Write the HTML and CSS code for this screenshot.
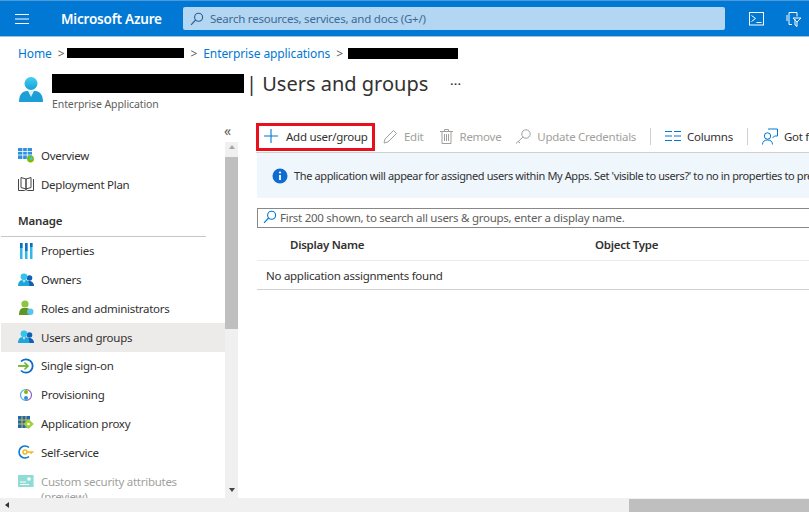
FILE: index.html
```html
<!DOCTYPE html>
<html>
<head>
    <meta charset='utf-8'>
    <title>Users and groups - Microsoft Azure</title>
    <link rel="stylesheet" href="styles.css">
</head>
<body>
<div class="app">
    <header class="topbar">
        <svg class="menu-icon" width="14" height="12" viewBox="0 0 14 12"><path d="M0 1.5h14M0 6h14M0 10.5h14" stroke="#fff" stroke-width="1.1"/></svg>
        <div class="brand">Microsoft Azure</div>
        <div class="search">
            <svg width="14" height="14" viewBox="0 0 14 14" fill="none" stroke="#2b5f96" stroke-width="1.1"><circle cx="8.6" cy="5.2" r="4"/><path d="M5.6 8 1 12.8"/></svg>
            <span>Search resources, services, and docs (G+/)</span>
        </div>
        <svg class="top-icon" width="16" height="14" viewBox="0 0 16 14" fill="none" stroke="#fff"><rect x=".5" y=".5" width="14" height="12.5"/><path d="M2.5 3.5 6.5 6.5 2.5 9.5M7.5 10.5h5"/></svg>
        <svg class="top-icon" width="16" height="16" viewBox="0 0 16 16" fill="none" stroke="#fff"><path d="M3 1.5h8v4M3 1.5v12h3M1 4v6M9 8V14l2 1.5V11l4-4H7l4 4"/></svg>
    </header>

    <nav class="crumbs">
        <a>Home</a><span class="gt">&gt;</span><span class="blot blot-a"></span><span class="gt gt-b">&gt;</span><a>Enterprise applications</a><span class="gt">&gt;</span><span class="blot blot-b"></span>
    </nav>

    <div class="title-row">
        <svg class="app-icon" width="24" height="26" viewBox="0 0 24 26"><defs><linearGradient id="ua" x1="0" y1="0" x2="0" y2="1"><stop offset="0" stop-color="#3fd0f2"/><stop offset="1" stop-color="#1aa0d8"/></linearGradient></defs><circle cx="12" cy="6.5" r="6.5" fill="url(#ua)"/><path d="M0 25c0-7 3-11 8-11h8c5 0 8 4 8 11z" fill="#1c9fd6"/><path d="M9 14h6l-3 6z" fill="#d8f3fb"/></svg>
        <div class="title-text">
            <div class="title-line"><span class="blot blot-title"></span><h1>| Users and groups</h1><span class="more">···</span></div>
            <div class="subtitle">Enterprise Application</div>
        </div>
    </div>

    <div class="body">
        <aside class="side">
            <div class="collapse">«</div>
            <div class="side-main">
                <ul class="nav">
                    <li><svg width="16" height="16" viewBox="0 0 16 16"><path d="M0 1h14v11H0z" fill="#2f8fe0"/><path d="M0 4.5h14M0 8h14M4.7 1v11M9.3 1v11" stroke="#fff" stroke-width=".8"/><circle cx="12.5" cy="12" r="3.4" fill="#7fba00"/><circle cx="13" cy="11.5" r="1.5" fill="#39c7e8"/></svg>Overview</li>
                    <li><svg width="16" height="16" viewBox="0 0 16 16" fill="none" stroke="#444"><path d="M.5 3v11.5h6l1.5-1 1.5 1h6V3"/><path d="M3 1.5 8 3v10L3 11.5zM13 1.5 8 3v10l5-1.5z" fill="#fff"/></svg>Deployment Plan</li>
                    <li class="group">Manage</li>
                    <li><svg width="16" height="16" viewBox="0 0 16 16"><path d="M2 0h2.500v16H2zM7 0h2.500v16H7zM12 0h2.500v16H12z" fill="#34b6ea"/><path d="M2 0h2.500v5H2zM7 0h2.500v8H7zM12 0h2.500v4H12z" fill="#0b6fc4"/></svg>Properties</li>
                    <li><svg width="16" height="16" viewBox="0 0 16 16"><use href="#people"/></svg>Owners</li>
                    <li><svg width="16" height="16" viewBox="0 0 16 16"><circle cx="7" cy="4" r="3.6" fill="#8cc63f"/><path d="M1 15c0-5 2-7 4-7h4c2 0 4 2 4 7z" fill="#5e9624"/><circle cx="12.3" cy="11.8" r="3.2" fill="#5cc4ea"/></svg>Roles and administrators</li>
                    <li class="active"><svg width="16" height="16" viewBox="0 0 16 16"><use href="#people"/></svg>Users and groups</li>
                    <li><svg width="16" height="16" viewBox="0 0 16 16" fill="none"><path d="M3 3.5A6.7 6.7 0 1 1 3 12.500" stroke="#0a6cc4" stroke-width="1.8"/><path d="M0 8h9" stroke="#6cb52d" stroke-width="1.8"/><path d="M6.500 4.500 10 8l-3.500 3.500" stroke="#6cb52d" stroke-width="1.6"/></svg>Single sign-on</li>
                    <li><svg width="16" height="16" viewBox="0 0 16 16" fill="none"><path d="M8 2.500a5.500 5.500 0 0 1 0 11" stroke="#8a5fb8" stroke-width="1.2"/><path d="M8 13.500a5.500 5.500 0 0 1 0-11" stroke="#45a9e0" stroke-width="1.2"/><circle cx="8" cy="5" r="2" fill="#7fba00"/><circle cx="8" cy="11" r="2" fill="#2f8fe0"/></svg>Provisioning</li>
                    <li><svg width="16" height="16" viewBox="0 0 16 16"><path d="M0 1h12v12H0z" fill="#1668c0"/><path d="M4 1v12M8 1v12M0 5h12M0 9h12" stroke="#f0c420" stroke-width=".9"/><path d="M10.500 4 15.800 9 10.500 14 5.500 9z" fill="#a3cf3c"/><circle cx="10.500" cy="9" r="1.300" fill="#fff"/></svg>Application proxy</li>
                    <li><svg width="16" height="16" viewBox="0 0 16 16" fill="none"><path d="M11 3.500A6 6 0 1 0 11 12.500" stroke="#0a78d4" stroke-width="1.6"/><circle cx="7" cy="8" r="2" stroke="#f2b91c" stroke-width="1.4"/><path d="M9 8h6.500M13 8v2" stroke="#f2b91c" stroke-width="1.4"/></svg>Self-service</li>
                    <li class="disabled"><svg width="16" height="16" viewBox="0 0 16 16"><rect y="1" width="12" height="12" fill="#8fdcd4" transform="scale(1.3 1)"/><path d="M2 8h6M2 10.500h9" stroke="#fff"/><circle cx="11" cy="5" r="1.800" fill="#fff"/></svg><span>Custom security attributes (preview)</span></li>
                </ul>
                <div class="vscroll">
                    <span class="arrow-up"></span>
                    <span class="vthumb"></span>
                    <span class="arrow-down"></span>
                </div>
            </div>
        </aside>

        <main class="content">
            <div class="toolbar">
                <button class="tool add"><svg width="14" height="14" viewBox="0 0 14 14"><path d="M7 0v14M0 7h14" stroke="#0078d4" stroke-width="1.1"/></svg>Add user/group</button>
                <button class="tool off edit"><svg width="15" height="15" viewBox="0 0 15 15" fill="none" stroke="#a19f9d"><path d="M1 14l1-4 8.500-8.500 3 3L5 13z"/></svg>Edit</button>
                <button class="tool off remove"><svg width="13" height="15" viewBox="0 0 13 15" fill="none" stroke="#a19f9d"><path d="M0 2.500h13M4.500 2.500V.5h4v2M2 2.500v12h9v-12M4.500 5v7M6.500 5v7M8.500 5v7"/></svg>Remove</button>
                <button class="tool off cred"><svg width="16" height="15" viewBox="0 0 16 15" fill="none" stroke="#a19f9d"><circle cx="11" cy="5" r="4.200"/><path d="M8 8 1 14.500M3 12.500l2 1.500"/></svg>Update Credentials</button>
                <span class="sep"></span>
                <button class="tool cols"><svg width="16" height="10" viewBox="0 0 16 10"><path d="M0 .5h7M9 .5h7M0 5h7M9 5h7M0 9.500h7M9 9.500h7" stroke="#0078d4"/></svg>Columns</button>
                <span class="sep"></span>
                <button class="tool got"><svg width="16" height="17" viewBox="0 0 16 17" fill="none" stroke="#0078d4"><circle cx="5.500" cy="8" r="3.200"/><path d="M.5 16.500c0-3 2-4.500 5-4.500s5 1.500 5 4.500M6 1h9.500v7H12.500l-2 2"/></svg>Got feedback?</button>
            </div>

            <div class="notice">
                <svg width="16" height="16" viewBox="0 0 16 16"><circle cx="8" cy="8" r="7.500" fill="#0f6cd0"/><path d="M8 7v5" stroke="#fff" stroke-width="1.8"/><circle cx="8" cy="4.500" r="1.100" fill="#fff"/></svg>
                <span>The application will appear for assigned users within My Apps. Set 'visible to users?' to no in properties to prevent this.</span>
            </div>

            <div class="filter">
                <svg width="14" height="14" viewBox="0 0 14 14" fill="none" stroke="#0078d4" stroke-width="1.1"><circle cx="8.600" cy="5.200" r="4"/><path d="M5.600 8 1 12.800"/></svg>
                <span>First 200 shown, to search all users &amp; groups, enter a display name.</span>
            </div>

            <div class="thead"><span class="col-name">Display Name</span><span class="col-type">Object Type</span></div>
            <div class="empty">No application assignments found</div>
        </main>
    </div>

    <div class="hscroll">
        <span class="arrow-left"></span>
        <span class="hthumb"></span>
    </div>
</div>

<svg width="0" height="0" class="defs">
    <symbol id="people" viewBox="0 0 16 16">
        <circle cx="11.500" cy="6" r="2.800" fill="#0f5fb5"/>
        <path d="M8 14c0-3.500 1.500-5 3.500-5s4.500 1.500 4.500 5z" fill="#0f5fb5"/>
        <circle cx="6" cy="4.800" r="3.400" fill="#35c3ec"/>
        <path d="M0 14c0-4 2-5.800 4-5.800h4c2 0 3.500 1.800 3.500 5.800z" fill="#1da5dc"/>
        <path d="M4.800 8.200h2.400L6 11z" fill="#e2f6fc"/>
    </symbol>
</svg>
</body>
</html>
```

FILE: styles.css
```css
* {
    box-sizing: border-box;
    font-family: "Noto Sans", "Open Sans", sans-serif;
}
html, body {
    margin: 0;
    height: 100%;
    overflow: hidden;
    background-color: #fff;
    color: #323130;
    font-size: 11.5px;
}
.defs {
    position: absolute;
}
.app {
    height: 512px;
    display: flex;
    flex-direction: column;
}

/* top bar */
.topbar {
    height: 37px;
    flex: none;
    display: flex;
    align-items: center;
    background-color: #0078d4;
    border-top: 1px solid #4b9bdc;
    border-bottom: 1px solid #8fc3ea;
    color: #fff;
}
.menu-icon {
    margin-left: 15px;
}
.brand {
    margin-left: 32px;
    width: 122px;
    font-size: 13.5px;
    font-weight: 600;
    letter-spacing: -0.2px;
    white-space: nowrap;
}
.search {
    width: 542px;
    height: 23px;
    display: flex;
    align-items: center;
    gap: 6px;
    padding-left: 7px;
    background-color: #b3d6f2;
    border-radius: 2px;
    color: #3f6a94;
    letter-spacing: -0.22px;
}
.top-icon {
    margin-left: 24px;
}
.top-icon + .top-icon {
    margin-left: 21px;
}

/* breadcrumb */
.crumbs {
    height: 32px;
    flex: none;
    display: flex;
    align-items: center;
    padding-left: 18px;
    font-size: 12px;
    color: #0078d4;
    letter-spacing: -0.1px;
}
.gt {
    margin: 0 6px;
    color: #605e5c;
}
.gt-b {
    margin: 0 6px 0 7px;
}
.blot {
    display: inline-block;
    background-color: #000;
}
.blot-a {
    width: 117px;
    height: 10px;
    margin-left: -4px;
}
.blot-b {
    width: 110px;
    height: 11px;
    margin-left: -1px;
}

/* title */
.title-row {
    height: 53px;
    flex: none;
    display: flex;
    padding: 2px 0 0 19px;
}
.app-icon {
    margin-top: 6px;
}
.title-text {
    margin-left: 9px;
}
.title-line {
    height: 24px;
    display: flex;
    align-items: center;
}
.blot-title {
    width: 192px;
    height: 19px;
}
h1 {
    margin: 0 0 0 2px;
    font-size: 20px;
    font-weight: 400;
    white-space: nowrap;
}
.more {
    margin-left: 22px;
    font-size: 11px;
    font-weight: 700;
    letter-spacing: 0.6px;
}
.subtitle {
    margin-top: 2px;
    font-size: 10.5px;
    color: #605e5c;
    letter-spacing: -0.1px;
}

/* left menu */
.body {
    flex: 1;
    min-height: 0;
    display: flex;
}
.side {
    width: 240px;
    flex: none;
    display: flex;
    flex-direction: column;
}
.collapse {
    height: 20px;
    flex: none;
    padding-left: 224px;
    font-size: 14px;
    line-height: 18px;
    color: #605e5c;
}
.side-main {
    flex: 1;
    min-height: 0;
    display: flex;
    padding-right: 2px;
}
.nav {
    flex: 1;
    margin: -1px 0 0;
    padding: 0;
    list-style: none;
    overflow: hidden;
    letter-spacing: -0.27px;
}
.nav li {
    height: 28.75px;
    display: flex;
    align-items: center;
    gap: 7px;
    margin-left: 1px;
    padding-left: 18px;
}
.nav li svg {
    flex: none;
    margin-left: -1px;
}
.nav li.group {
    height: 38px;
    margin: 0 19px 0 1px;
    padding: 7px 0 0 17px;
    border-bottom: 1px solid #c8c6c4;
    font-weight: 600;
    letter-spacing: -0.2px;
}
.nav li.active {
    background-color: #edebe9;
}
.nav li.disabled {
    align-items: flex-start;
    color: #a19f9d;
    line-height: 15px;
    padding-top: 7px;
    padding-right: 40px;
}

/* fake scrollbars */
.vscroll {
    width: 13px;
    flex: none;
    display: flex;
    flex-direction: column;
    align-items: center;
    background-color: #f0f0f0;
}
.vthumb {
    width: 13px;
    height: 172px;
    margin-top: 8px;
    background-color: #bfbfbf;
}
.arrow-up {
    margin-top: 3px;
    border: 3.5px solid transparent;
    border-top: 0;
    border-bottom: 4px solid #a6a6a6;
}
.arrow-down {
    margin-top: auto;
    margin-bottom: 6px;
    border: 3.5px solid transparent;
    border-bottom: 0;
    border-top: 4px solid #444;
}
.hscroll {
    height: 14px;
    flex: none;
    display: flex;
    align-items: center;
    justify-content: space-between;
    background-color: #f0f0f0;
}
.arrow-left {
    margin-left: 5px;
    border: 3.5px solid transparent;
    border-left: 0;
    border-right: 4px solid #333;
}
.hthumb {
    width: 180px;
    height: 13px;
    align-self: flex-end;
    background-color: #bfbfbf;
}

/* content */
.content {
    flex: 1;
    min-width: 0;
    padding-left: 17px;
    overflow: hidden;
}
.toolbar {
    height: 31px;
    display: flex;
    align-items: center;
    margin-left: -1px;
    border-bottom: 1px solid #d2d0ce;
    padding-bottom: 1px;
    white-space: nowrap;
}
.tool {
    height: 28px;
    flex: none;
    display: flex;
    align-items: center;
    padding: 0 0 1px;
    border: none;
    background: none;
    color: #323130;
    font-size: 11.5px;
    letter-spacing: -0.27px;
}
.tool.off {
    color: #a19f9d;
}
.add {
    width: 119px;
    gap: 8px;
    padding-left: 5px;
    border: 3px solid #e8101c;
}
.edit {
    margin-left: 8px;
    gap: 6px;
}
.remove {
    margin-left: 16px;
    gap: 7px;
}
.cred {
    margin-left: 14px;
    gap: 6px;
}
.sep {
    width: 1px;
    height: 17px;
    flex: none;
    margin: 0 14px;
    background-color: #d2d0ce;
}
.cols {
    gap: 6px;
}
.got {
    gap: 6px;
}
.notice {
    height: 45px;
    display: flex;
    align-items: center;
    gap: 6px;
    padding-left: 15px;
    background-color: #eff6fc;
    white-space: nowrap;
    font-size: 11px;
    letter-spacing: -0.38px;
}
.notice svg {
    flex: none;
}
.filter {
    height: 20px;
    display: flex;
    align-items: center;
    gap: 3px;
    margin-top: 10px;
    padding: 0 0 2px 5px;
    border: 1px solid #8a8886;
    border-right: none;
    white-space: nowrap;
    color: #605e5c;
    letter-spacing: -0.27px;
}
.filter svg {
    flex: none;
}
.thead {
    height: 33px;
    display: flex;
    align-items: center;
    border-bottom: 1px solid #edebe9;
    font-weight: 600;
    letter-spacing: -0.27px;
}
.col-name {
    width: 338px;
    padding-left: 33px;
}
.empty {
    height: 29px;
    display: flex;
    align-items: center;
    padding-left: 9px;
    border-bottom: 1px solid #d2d0ce;
    letter-spacing: -0.27px;
}
```
